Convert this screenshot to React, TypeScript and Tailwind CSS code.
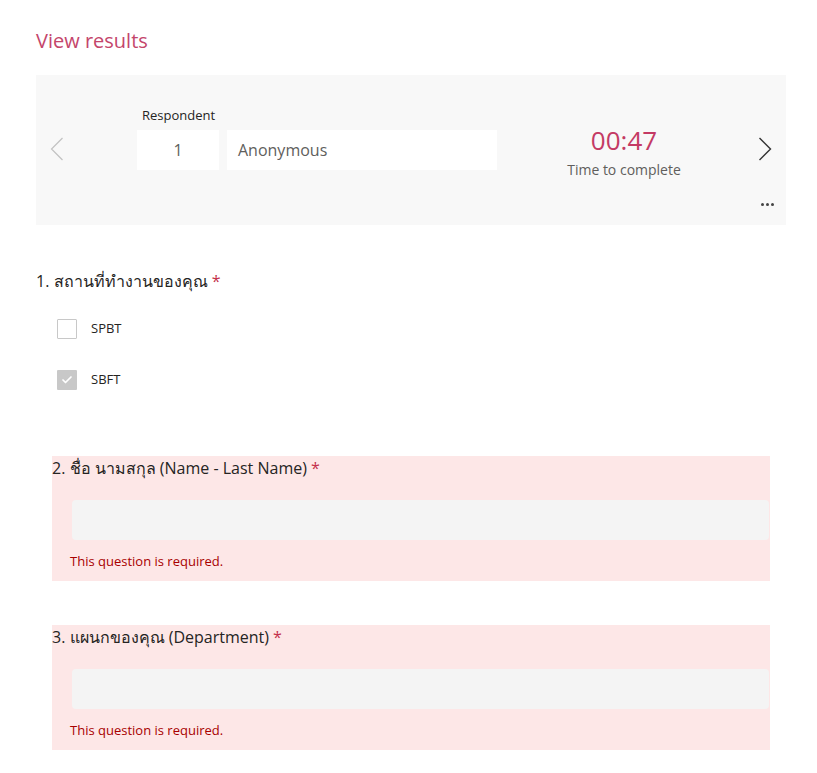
import { Check } from "lucide-react"

const font = { fontFamily: '"Open Sans", "Noto Sans", "DejaVu Sans", sans-serif' }

function RequiredQuestion({ title }: { title: string }) {
  return (
    <div className="ml-4 mr-[47px] h-[125px] bg-[#fde7e7]">
      <div className="text-[16px] leading-[24px] text-[#252423]">
        {title} <span className="text-[#c4314b]">*</span>
      </div>
      <div className="ml-5 mr-px mt-[20px] h-10 rounded-[4px] bg-[#f4f4f4]" />
      <div className="ml-[18px] mt-[12px] text-[13px] leading-[18px] text-[#a80000]">
        This question is required.
      </div>
    </div>
  )
}

export default function App() {
  return (
    <div className="w-[817px] h-[773px] bg-white overflow-hidden" style={font}>
      <div className="pl-9 pt-[27px]">
        <h1 className="text-[20px] leading-[28px] text-[#c4456b]">View results</h1>

        <div className="mt-5 w-[750px] h-[150px] bg-[#f8f8f8] relative flex items-start">
          <svg className="ml-[14px] mt-[62px]" width="14" height="24" viewBox="0 0 14 24" fill="none">
            <polyline points="12.5,1 1.5,12 12.5,23" stroke="#c2c2c2" strokeWidth="1.2" />
          </svg>
          <div className="ml-[73px] mt-[31px] flex flex-col">
            <span className="ml-[5px] text-[13px] leading-[18px] text-[#252423]">Respondent</span>
            <div className="mt-[6px] flex gap-2">
              <div className="w-[82px] h-10 bg-white flex items-center justify-center text-[16px] text-[#605e5c]">
                1
              </div>
              <div className="w-[270px] h-10 bg-white flex items-center px-[11px] text-[16px] text-[#605e5c]">
                Anonymous
              </div>
            </div>
          </div>
          <div className="ml-[69px] mt-[49px] w-[116px] flex flex-col items-center">
            <span className="text-[26px] leading-[32px] text-[#c43a64]">00:47</span>
            <span className="mt-[4px] text-[14px] leading-[20px] text-[#605e5c]">Time to complete</span>
          </div>
          <svg className="ml-[76px] mt-[62px]" width="14" height="24" viewBox="0 0 14 24" fill="none">
            <polyline points="1.5,1 12.5,12 1.5,23" stroke="#333333" strokeWidth="1.4" />
          </svg>
          <div className="absolute right-[12px] bottom-[19px] flex gap-[2px]">
            <span className="w-[3px] h-[3px] rounded-full bg-[#444]" />
            <span className="w-[3px] h-[3px] rounded-full bg-[#444]" />
            <span className="w-[3px] h-[3px] rounded-full bg-[#444]" />
          </div>
        </div>

        <div className="mt-[44px] text-[16px] leading-[24px] text-[#252423]">
          1. สถานที่ทำงานของคุณ <span className="text-[#c4314b]">*</span>
        </div>
        <div className="mt-[26px] ml-[21px] flex flex-col gap-[31px]">
          <div className="flex items-center">
            <span className="w-5 h-5 border border-[#c8c8c8] bg-white rounded-[1px]" />
            <span className="ml-[14px] text-[13px] text-[#252423]">SPBT</span>
          </div>
          <div className="flex items-center">
            <span className="w-5 h-5 bg-[#c8c8c8] rounded-[1px] flex items-center justify-center">
              <Check className="w-3 h-3 text-white" strokeWidth={3.5} />
            </span>
            <span className="ml-[14px] text-[13px] text-[#252423]">SBFT</span>
          </div>
        </div>
      </div>

      <div className="mt-[66px] pl-9 flex flex-col gap-[44px]">
        <RequiredQuestion title="2. ชื่อ นามสกุล (Name - Last Name)" />
        <RequiredQuestion title="3. แผนกของคุณ (Department)" />
      </div>
    </div>
  )
}
